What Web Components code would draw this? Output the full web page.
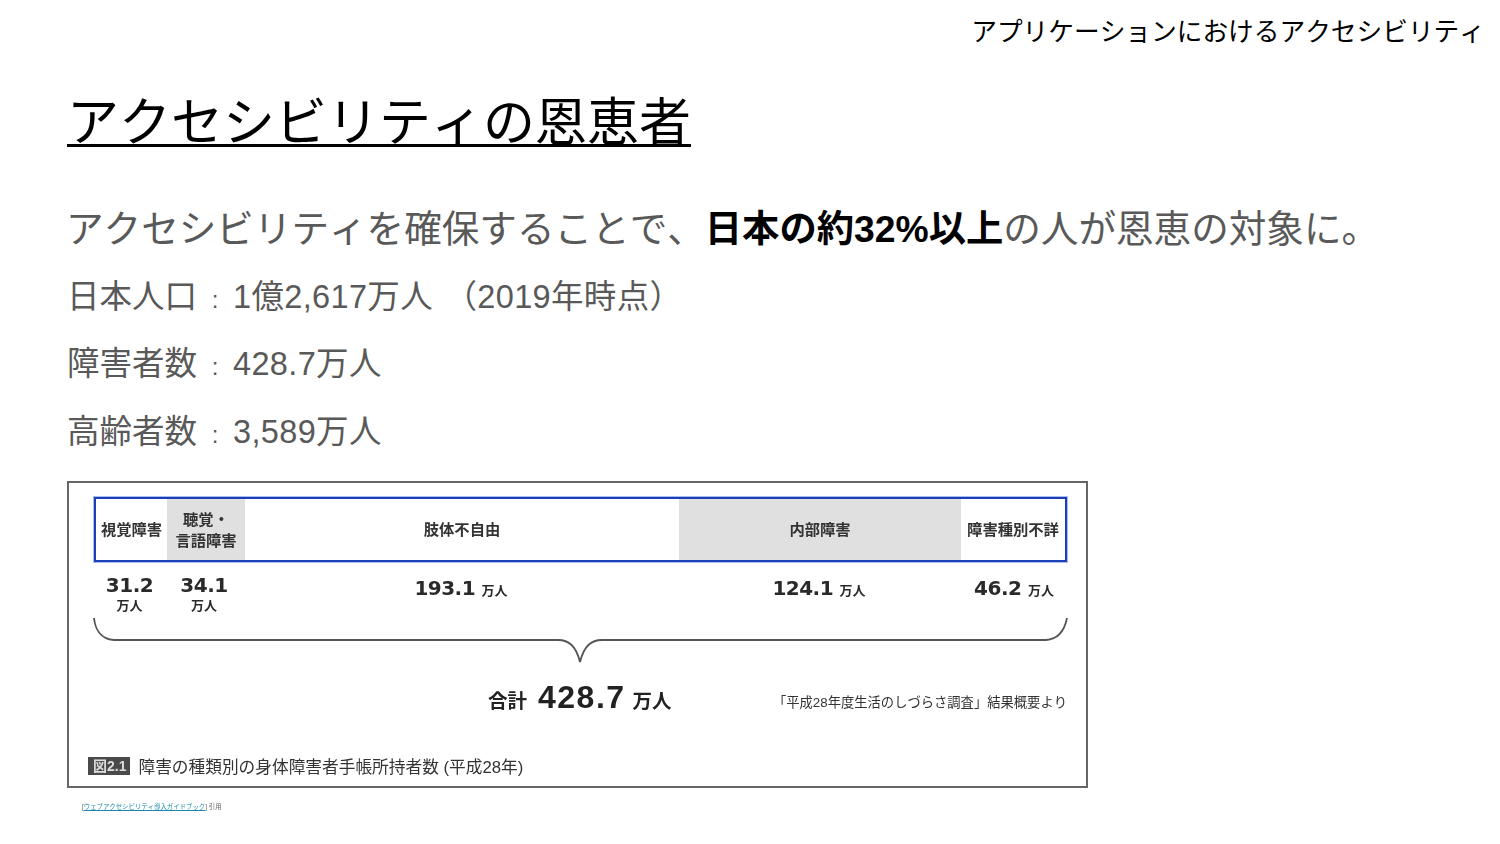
<!DOCTYPE html>
<html lang="ja">
<head>
<meta charset="utf-8">
<title>アクセシビリティの恩恵者</title>
<style>
  html, body { margin: 0; background: #fff; }
  body { font-family: "Liberation Sans", "Noto Sans CJK JP", sans-serif; font-kerning: none; overflow: hidden; }
</style>
</head>
<body>
<slide-page>
  <span slot="section">アプリケーションにおけるアクセシビリティ</span>
  <span slot="title">アクセシビリティの恩恵者</span>
  <lead-line>アクセシビリティを確保することで、<b>日本の約32%以上</b>の人が恩恵の対象に。</lead-line>
  <stat-line label="日本人口">1億2,617万人 （2019年時点）</stat-line>
  <stat-line label="障害者数">428.7万人</stat-line>
  <stat-line label="高齢者数">3,589万人</stat-line>
  <disability-figure></disability-figure>
  <source-note></source-note>
</slide-page>

<script>
class SlidePage extends HTMLElement {
  static tag = 'slide-page'
  constructor() {
    super()
    this.attachShadow({ mode: 'open' })
    this.shadowRoot.innerHTML = `
      <style>
        :host { display: block; width: 1500px; height: 844px; box-sizing: border-box; padding: 14px 15px 0 67px; color: #000; }
        .section { text-align: right; font-size: 25.7px; line-height: 37px; white-space: nowrap; }
        h1 { width: fit-content; margin: 51px 0 0; font-size: 52px; font-weight: 400; line-height: 42px; border-bottom: 3px solid #000; white-space: nowrap; }
        .body { display: flex; flex-direction: column; align-items: flex-start; margin-top: 54px; }
      </style>
      <div class="section"><slot name="section"></slot></div>
      <h1><slot name="title"></slot></h1>
      <div class="body"><slot></slot></div>
    `
  }
}

class LeadLine extends HTMLElement {
  static tag = 'lead-line'
  constructor() {
    super()
    this.attachShadow({ mode: 'open' })
    this.shadowRoot.innerHTML = `
      <style>
        :host { display: block; margin-left: -1px; font-size: 37.6px; line-height: 56px; color: #595959; white-space: nowrap; }
        ::slotted(b) { color: #000; font-size: 37.3px; font-weight: 700; }
      </style>
      <slot></slot>
    `
  }
}

class StatLine extends HTMLElement {
  static tag = 'stat-line'
  constructor() {
    super()
    this.attachShadow({ mode: 'open' })
    this.shadowRoot.innerHTML = `
      <style>
        :host { display: block; margin-top: 11.5px; font-size: 32.5px; line-height: 56px; color: #595959; white-space: nowrap; }
        .sep { display: inline-block; width: 36px; font-size: 24px; line-height: 20px; text-align: center; }
        .val { letter-spacing: .35px; word-spacing: 2px; }
      </style>
      <span class="label"></span><span class="sep">:</span><span class="val"><slot></slot></span>
    `
    this.shadowRoot.querySelector('.label').textContent = this.getAttribute('label')
  }
}

class DisabilityFigure extends HTMLElement {
  static tag = 'disability-figure'
  constructor() {
    super()
    this.attachShadow({ mode: 'open' })
    this.shadowRoot.innerHTML = `
      <style>
        :host { display: block; box-sizing: border-box; width: 1021px; height: 307px; margin-top: 21.5px; padding: 14px 19px 0 25px; border: 2px solid #666; color: #222; }
        .inner { filter: blur(.45px); }
        .cols { display: grid; grid-template-columns: 71px 78px 434px 282px 1fr; text-align: center; }
        .head { box-sizing: border-box; height: 65px; border: 2px solid #1c3fb8; box-shadow: 0 0 0 1px #a9bdf0; }
        .head div { display: flex; align-items: center; justify-content: center; font-size: 15.3px; font-weight: 700; line-height: 21px; color: #333; white-space: nowrap; }
        .shade { background: #e0e0e0; }
        .nums { height: 56px; }
        .nums div { padding-top: 11px; font: 700 20px/24px "DejaVu Sans", sans-serif; letter-spacing: -.5px; color: #2a2a2a; }
        .nums small { font: 700 13px/15px "Noto Sans CJK JP", sans-serif; letter-spacing: 0; }
        .stack small { display: block; }
        .inline { padding: 14px 0 0 2px !important; }
        svg { display: block; width: 975px; height: 50px; margin-left: -1px; }
        .total { display: flex; align-items: center; height: 60px; margin-top: -1px; }
        .sum { margin-left: 394px; font-size: 19.5px; font-weight: 700; white-space: nowrap; }
        .sum b { margin: 0 7px 0 11px; font-size: 32px; letter-spacing: 1.5px; }
        .ref { margin-left: auto; padding-top: 8px; font-size: 13.3px; color: #333; white-space: nowrap; }
        .caption { display: flex; align-items: center; gap: 8px; margin: 27px 0 0 -6px; font-size: 16.7px; color: #333; white-space: nowrap; }
        .tag { background: #4a4a4a; color: #ddd; font-size: 14px; font-weight: 700; line-height: 18px; padding: 0 4px 0 5px; }
      </style>
      <div class="inner">
        <div class="cols head">
          <div>視覚障害</div>
          <div class="shade">聴覚・<br>言語障害</div>
          <div>肢体不自由</div>
          <div class="shade">内部障害</div>
          <div>障害種別不詳</div>
        </div>
        <div class="cols nums">
          <div class="stack">31.2<small>万人</small></div>
          <div class="stack">34.1<small>万人</small></div>
          <div class="inline">193.1 <small>万人</small></div>
          <div class="inline">124.1 <small>万人</small></div>
          <div class="inline">46.2 <small>万人</small></div>
        </div>
        <svg viewBox="0 0 975 50" fill="none" stroke="#555" stroke-width="1.8">
          <path d="M1 0C2 10 7 21 21 22H465C476 22 483 28 487 44C491 28 498 22 509 22H953C967 21 972 10 974 0"/>
        </svg>
        <div class="total">
          <div class="sum">合計<b>428.7</b>万人</div>
          <div class="ref">「平成28年度生活のしづらさ調査」結果概要より</div>
        </div>
        <div class="caption"><span class="tag">図2.1</span>障害の種類別の身体障害者手帳所持者数 (平成28年)</div>
      </div>
    `
  }
}

class SourceNote extends HTMLElement {
  static tag = 'source-note'
  constructor() {
    super()
    this.attachShadow({ mode: 'open' })
    this.shadowRoot.innerHTML = `
      <style>
        :host { display: block; margin: 14px 0 0 15px; font-size: 6.4px; line-height: 10px; color: #666; white-space: nowrap; filter: blur(.3px); }
        a { color: #1a8aa8; text-decoration: underline; }
      </style>
      [<a>ウェブアクセシビリティ導入ガイドブック</a>] 引用
    `
  }
}

;[SlidePage, LeadLine, StatLine, DisabilityFigure, SourceNote].forEach(c => customElements.define(c.tag, c))
</script>
</body>
</html>
